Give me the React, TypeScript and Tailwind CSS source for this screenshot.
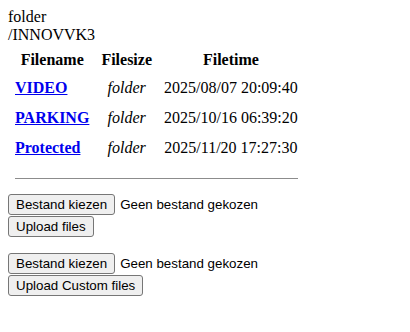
export default function App() {
  const rows = [
    { name: "VIDEO", time: "2025/08/07 20:09:40" },
    { name: "PARKING", time: "2025/10/16 06:39:20" },
    { name: "Protected", time: "2025/11/20 17:27:30" },
  ];
  const btn =
    "bg-[#efefef] border border-[#767676] rounded-[3px] px-[7px] py-[1px] text-[13.33px] leading-[17px] font-['Liberation_Sans',Arial,sans-serif] text-black";
  const label = "text-[13.33px] leading-[17px] font-['Liberation_Sans',Arial,sans-serif]";
  return (
    <div className="p-2 font-['Liberation_Serif','Times_New_Roman',serif] text-base leading-[18px] text-black bg-white min-h-screen">
      <div>folder</div>
      <div>/INNOVVK3</div>
      <table className="border-separate border-spacing-[2px]">
        <thead>
          <tr>
            <th className="px-[5px] pt-[5px] pb-[3px] font-bold text-center">Filename</th>
            <th className="px-[5px] pt-[5px] pb-[3px] font-bold text-center">Filesize</th>
            <th className="px-[5px] pt-[5px] pb-[3px] font-bold text-center">Filetime</th>
          </tr>
        </thead>
        <tbody>
          {rows.map((r) => (
            <tr key={r.name}>
              <td className="p-[5px] text-left">
                <a href="#" className="font-bold text-[#0000ee] underline">
                  {r.name}
                </a>
              </td>
              <td className="p-[5px] text-center italic">folder</td>
              <td className="p-[5px] text-center">{r.time}</td>
            </tr>
          ))}
          <tr>
            <td colSpan={3} className="p-[5px]">
              <div className="mt-[9px] mb-[8px] border-t border-[#8c8c8c]" />
            </td>
          </tr>
        </tbody>
      </table>
      <form className="mb-4">
        <div className="flex items-baseline gap-[5px]">
          <button type="button" className={btn}>Bestand kiezen</button>
          <span className={label}>Geen bestand gekozen</span>
        </div>
        <div className="mt-[1px]">
          <button type="button" className={btn}>Upload files</button>
        </div>
      </form>
      <form>
        <div className="flex items-baseline gap-[5px]">
          <button type="button" className={btn}>Bestand kiezen</button>
          <span className={label}>Geen bestand gekozen</span>
        </div>
        <div className="mt-[1px]">
          <button type="button" className={btn}>Upload Custom files</button>
        </div>
      </form>
    </div>
  );
}
